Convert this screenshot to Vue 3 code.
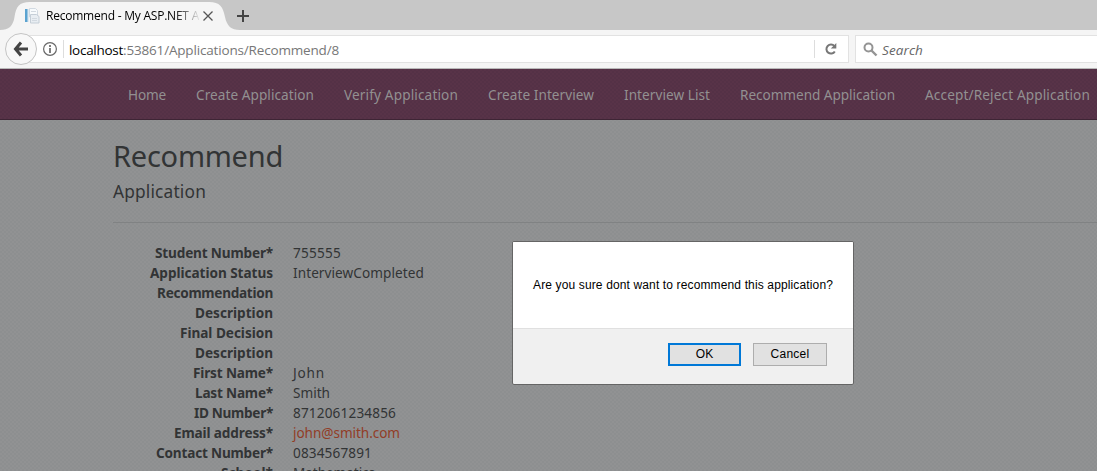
<script setup>
const nav = [
  ['Home', 38], ['Create Application', 118], ['Verify Application', 114], ['Create Interview', 106],
  ['Interview List', 86], ['Recommend Application', 155], ['Accept/Reject Application', 165],
]
const rows = [
  ['Student Number*', 118, '755555', 48],
  ['Application Status', 123, 'InterviewCompleted', 131],
  ['Recommendation', 116, '', 0],
  ['Description', 78, '', 0],
  ['Final Decision', 93, '', 0],
  ['Description', 78, '', 0],
  ['First Name*', 80, 'John', 32],
  ['Last Name*', 78, 'Smith', 37],
  ['ID Number*', 79, '8712061234856', 103],
  ['Email address*', 99, 'john@smith.com', 107],
  ['Contact Number*', 117, '0834567891', 79],
  ['School*', 52, 'Mathematics', 82],
]
// Spreads a label's letters so that it takes the given width.
const vFit = {
  mounted(el, { value }) {
    const n = el.textContent.length
    if (!value || !n) return
    const gap = (value - el.getBoundingClientRect().width) / n
    el.style.letterSpacing = gap + 'px'
  },
}
</script>

<template>
  <div class="window">
    <div class="tabs">
      <svg class="tabshape" width="244" height="30" viewBox="0 0 244 30">
        <path d="M0 30C9 30 13 26 14.500 17C16 7 19 2 30 2H209C220 2 223 7 225 17C227 26 231 30 240 30Z" fill="#f5f5f5" />
      </svg>
      <svg class="fav" width="16" height="16" viewBox="0 0 16 16">
        <path d="M1 1h4v13H1z" fill="#dfe9f1" /><path d="M1 1h2.500v13H1z" fill="#5ba3d0" />
        <path d="M5.500.5h6l2 2V9h-8z" fill="#f7fafc" stroke="#d2dae2" />
        <path d="M6.500 6.500h6l2.500 2v6.500H6.500z" fill="#e8edf2" stroke="#c5ced7" />
        <path d="M7 3.500h5M8 10.500h5M8 12.500h5" stroke="#d2d9e0" />
      </svg>
      <div class="title"><span v-fit="153">Recommend - My ASP.NET A</span></div>
      <svg class="close" width="12" height="12" viewBox="0 0 12 12"><path d="M1.500 1.500l9 9M10.500 1.500l-9 9" stroke="#555" stroke-width="1.300" /></svg>
      <svg class="plus" width="14" height="14" viewBox="0 0 14 14"><path d="M7 1v12M1 7h12" stroke="#444" stroke-width="2" /></svg>
    </div>
    <div class="toolbar">
      <div class="address">
        <svg class="info" width="16" height="16" viewBox="0 0 16 16">
          <circle cx="8" cy="8" r="6.400" fill="none" stroke="#686868" stroke-width="1.200" />
          <path d="M8 4v2M8 7v5" stroke="#686868" stroke-width="1.700" />
        </svg>
        <i class="line"></i>
        <span class="url"><span v-fit="54">localhost</span><span v-fit="216" class="path">:53861/Applications/Recommend/8</span></span>
        <i class="line end"></i>
        <svg class="reload" width="12" height="14" viewBox="0 0 12 14">
          <path d="M9.400 4.200A4.500 4.500 0 1 0 9.800 9.400" fill="none" stroke="#777" stroke-width="2" /><path d="M11.300 1v5.500H5.800z" fill="#777" />
        </svg>
      </div>
      <div class="search">
        <svg width="15" height="15" viewBox="0 0 15 15"><circle cx="5.500" cy="5.500" r="4" fill="none" stroke="#949494" stroke-width="2" /><path d="M8.500 8.500l5 5" stroke="#949494" stroke-width="2.400" /></svg>
        <em v-fit="41">Search</em>
      </div>
      <div class="back">
        <svg width="16" height="16" viewBox="0 0 16 16"><path d="M8 1.500L2.500 8L8 14.500M3 8H15" fill="none" stroke="#444" stroke-width="3" /></svg>
      </div>
    </div>
    <div class="page">
      <nav><a v-for="n in nav" :key="n[0]" :style="{ width: n[1] + 'px' }"><span v-fit="n[1]">{{ n[0] }}</span></a></nav>
      <main>
        <h2><span v-fit="170">Recommend</span></h2>
        <h4><span v-fit="93">Application</span></h4>
        <hr />
        <dl>
          <template v-for="(r, i) in rows" :key="i">
            <dt><span v-fit="r[1]">{{ r[0] }}</span></dt>
            <dd :class="{ mail: r[2].includes('@') }"><span v-fit="r[3]">{{ r[2] }}</span></dd>
          </template>
        </dl>
      </main>
    </div>
    <div class="dialog">
      <div class="message"><span v-fit="300">Are you sure dont want to recommend this application?</span></div>
      <div class="actions">
        <button class="ok">OK</button>
        <button><span v-fit="39">Cancel</span></button>
      </div>
    </div>
  </div>
</template>

<style>
body { margin: 0; overflow: hidden; }
</style>

<style scoped>
.window { position: relative; height: 471px; overflow: hidden; display: flex; flex-direction: column; font-family: "Noto Sans", sans-serif; }
span, em { white-space: nowrap; }
.title span, .url span, nav span, main span, .message span, button span { display: inline-block; }
.tabs { position: relative; height: 30px; flex: none; background: #c7c7c7; display: flex; align-items: center; }
.tabshape { position: absolute; left: 0; top: 0; }
.fav { position: relative; margin-left: 24px; margin-top: 2px; }
.title { position: relative; width: 153px; margin-left: 6px; font-family: "Open Sans", sans-serif; font-size: 12px; line-height: 20px; margin-top: 2px; color: #000; -webkit-mask-image: linear-gradient(90deg, #000 128px, transparent 155px); mask-image: linear-gradient(90deg, #000 128px, transparent 155px); }
.close { position: relative; margin: 2px 0 0 3px; }
.plus { margin: 2px 0 0 22px; }
.toolbar { position: relative; flex: none; background: #f5f5f5; border-bottom: 1px solid #b9b9b9; display: flex; align-items: flex-start; padding: 5px 0 0 20px; height: 33px; }
.address { box-sizing: border-box; width: 829px; height: 28px; border: 1px solid #e2e2e2; background: #fff; display: flex; align-items: center; }
.info { margin-left: 21px; }
.line { width: 1px; height: 18px; background: #ddd; margin-left: 5px; }
.url { margin-left: 5px; font-family: "Open Sans", sans-serif; font-size: 13.5px; line-height: 20px; margin-top: 1px; color: #000; }
.path { color: #777; }
.end { margin-left: auto; }
.reload { margin: 0 11px 0 10px; }
.search { box-sizing: border-box; flex: 1; margin-left: 6px; height: 28px; border: 1px solid #e2e2e2; border-right: 0; background: #fff; display: flex; align-items: center; padding-left: 7px; font-family: "Open Sans", sans-serif; font-size: 13.5px; color: #666; }
.search em { margin: 1px 0 0 4px; }
.back { position: absolute; left: 5px; top: 3px; box-sizing: border-box; width: 32px; height: 32px; border: 1px solid #c4c4c4; border-radius: 50%; background: #f8f8f8; display: flex; align-items: center; justify-content: center; }
.page { flex: 1; min-height: 0; overflow: hidden; background-color: #919293; background-image: conic-gradient(#8d8f90 25%, transparent 0 50%, #8d8f90 0 75%, transparent 0); background-size: 4px 4px; }
nav { box-sizing: border-box; height: 51px; border-bottom: 1px solid #3e2535; padding-left: 128px; display: flex; gap: 30px; align-items: center; background-color: #583348; background-image: conic-gradient(#543146 25%, transparent 0 50%, #543146 0 75%, transparent 0); background-size: 4px 4px; font-size: 13.6px; line-height: 20px; color: #929091; }
nav a { flex: none; padding-top: 2px; }
main { padding-left: 113px; color: #323435; }
h2 { margin: 0; padding-top: 19px; font-size: 29px; line-height: 33px; font-weight: 400; }
h4 { margin: 10px 0 0; font-size: 17.3px; line-height: 20px; font-weight: 400; }
hr { margin: 20px 0; height: 1px; border: 0; background: #808283; }
dl { margin: 0; display: grid; grid-template-columns: 160px 1fr; column-gap: 20px; grid-auto-rows: 20px; font-size: 13.6px; line-height: 20px; }
dt { text-align: right; font-weight: 700; }
dd { margin: 0; }
.mail { color: #923d27; }
.dialog { position: absolute; left: 512px; top: 241px; box-sizing: border-box; width: 342px; height: 144px; border: 1px solid #656565; border-radius: 2px; background: #f0f0f0; font: 12px/16px "Liberation Sans", sans-serif; color: #000; overflow: hidden; }
.message { height: 86px; border-bottom: 1px solid #e0e0e0; background: #fff; display: flex; align-items: center; padding-left: 20px; }
.actions { display: flex; justify-content: flex-end; gap: 12px; padding: 14px 26px 0 0; }
button { box-sizing: border-box; width: 74px; height: 23px; padding: 0 0 2px; border: 1px solid #adadad; background: #e1e1e1; font: 12px/16px "Liberation Sans", sans-serif; color: #000; }
.ok { border: 2px solid #0078d7; width: 73px; }
</style>
